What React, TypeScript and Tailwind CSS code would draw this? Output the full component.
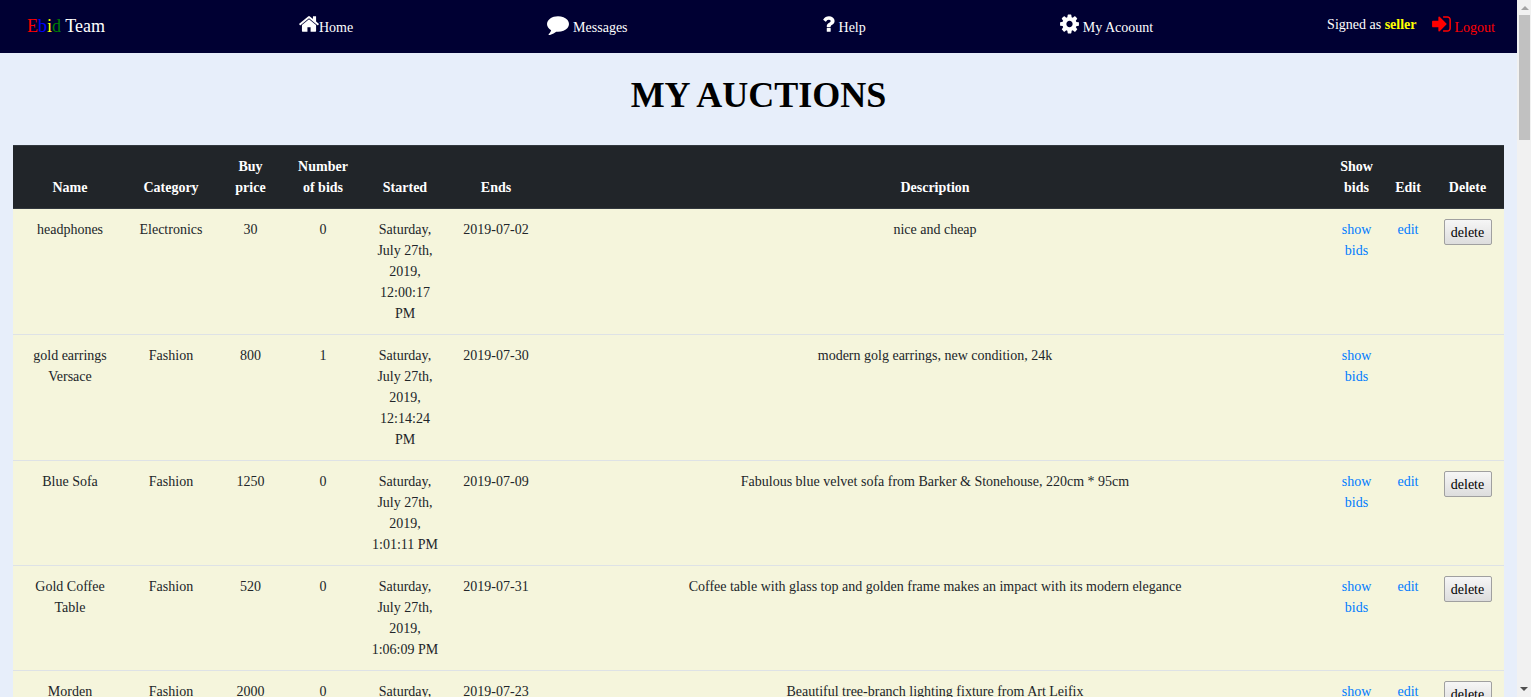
import React from "react";

type IconProps = { d: string; viewBox: string; className: string };

function Icon({ d, viewBox, className }: IconProps) {
  return (
    <svg viewBox={viewBox} className={`shrink-0 fill-current ${className}`} aria-hidden="true">
      <path d={d} />
    </svg>
  );
}

const HOME =
  "M1472 992v480q0 26-19 45t-45 19h-384v-384h-256v384h-384q-26 0-45-19t-19-45v-480q0-1 .5-3t.5-3l575-474 575 474q1 2 1 6zm223-69l-62 74q-8 9-21 11h-3q-13 0-21-7l-692-577-692 577q-12 8-24 7-13-2-21-11l-62-74q-8-10-7-23.5t11-21.5l719-599q32-26 76-26t76 26l244 204v-195q0-14 9-23t23-9h192q14 0 23 9t9 23v408l219 182q10 8 11 21.5t-7 23.5z";
const COMMENT =
  "M1792 896q0 174-120 321.5t-326 233-450 85.5q-70 0-145-8-198 175-460 242-49 14-114 22-17 2-30.5-9t-17.5-29v-1q-3-4-.5-12t2-10 4.5-9.5l6-9 7-8.5 8-9q7-8 31-34.5t34.5-38 31-39.5 32.5-51 27-59 26-76q-157-89-247.5-220t-90.5-281q0-130 71-248.5t191-204.5 286-136.5 348-50.5q244 0 450 85.5t326 233 120 321.5z";
const QUESTION =
  "M1088 1256v240q0 16-12 28t-28 12h-240q-16 0-28-12t-12-28v-240q0-16 12-28t28-12h240q16 0 28 12t12 28zm316-600q0 54-15.5 101t-35 76.5-55 59.5-57.5 43.5-61 35.5q-41 23-68.5 65t-27.5 67q0 17-12 32.5t-28 15.5h-240q-15 0-25.5-18.5t-10.5-37.5v-45q0-83 65-156.5t143-108.5q59-27 84-56t25-76q0-42-46.5-74t-107.5-32q-65 0-108 29-35 25-107 115-13 16-31 16-12 0-25-8l-164-125q-13-10-15.5-25t5.5-28q160-266 464-266 80 0 161 31t146 83 106 127.5 41 158.5z";
const COG =
  "M1152 896q0-106-75-181t-181-75-181 75-75 181 75 181 181 75 181-75 75-181zm512-109v222q0 12-8 23t-20 13l-185 28q-19 54-39 91 35 50 107 138 10 12 10 25t-9 23q-27 37-99 108t-94 71q-12 0-26-9l-138-108q-44 23-91 38-16 136-29 186-7 28-36 28h-222q-14 0-24.5-8.5t-11.5-21.5l-28-184q-49-16-90-37l-141 107q-10 9-25 9-14 0-25-11-126-114-165-168-7-10-7-23 0-12 8-23 15-21 51-66.5t54-70.5q-27-50-41-99l-183-27q-13-2-21-12.5t-8-23.5v-222q0-12 8-23t19-13l186-28q14-46 39-92-40-57-107-138-10-12-10-24 0-10 9-23 26-36 98.5-107.5t94.5-71.5q13 0 26 10l138 107q44-23 91-38 16-136 29-186 7-28 36-28h222q14 0 24.5 8.5t11.5 21.5l28 184q49 16 90 37l142-107q9-9 24-9 13 0 25 10 129 119 165 170 7 8 7 22 0 12-8 23-15 21-51 66.5t-54 70.5q26 50 41 98l183 28q13 2 21 12.5t8 23.5z";
const SIGN_IN =
  "M1312 896q0 26-19 45l-544 544q-19 19-45 19t-45-19-19-45v-288h-448q-26 0-45-19t-19-45v-384q0-26 19-45t45-19h448v-288q0-26 19-45t45-19 45 19l544 544q19 19 19 45zm352-352v704q0 119-84.5 203.5t-203.5 84.5h-320q-13 0-22.5-9.5t-9.5-22.5q0-4-1-20t-.5-26.5 3-23.5 10-19.5 20.5-6.5h320q66 0 113-47t47-113v-704q0-66-47-113t-113-47h-312l-11.5-1-11.5-3-8-5.5-7-9-2-13.5q0-4-1-20t-.5-26.5 3-23.5 10-19.5 20.5-6.5h320q119 0 203.5 84.5t84.5 203.5z";

const columns = [
  { label: "Name", width: "w-[114px]" },
  { label: "Category", width: "w-[88px]" },
  { label: "Buy price", width: "w-[71px]" },
  { label: "Number of bids", width: "w-[74px]" },
  { label: "Started", width: "w-[90px]" },
  { label: "Ends", width: "w-[92px]" },
  { label: "Description", width: "" },
  { label: "Show bids", width: "w-[57px]" },
  { label: "Edit", width: "w-[46px]" },
  { label: "Delete", width: "w-[73px]" },
];

type Auction = {
  name: string;
  category: string;
  price: number;
  bids: number;
  started: string;
  ends: string;
  description: string;
};

const auctions: Auction[] = [
  { name: "headphones", category: "Electronics", price: 30, bids: 0, started: "Saturday, July 27th, 2019, 12:00:17 PM", ends: "2019-07-02", description: "nice and cheap" },
  { name: "gold earrings Versace", category: "Fashion", price: 800, bids: 1, started: "Saturday, July 27th, 2019, 12:14:24 PM", ends: "2019-07-30", description: "modern golg earrings, new condition, 24k" },
  { name: "Blue Sofa", category: "Fashion", price: 1250, bids: 0, started: "Saturday, July 27th, 2019, 1:01:11 PM", ends: "2019-07-09", description: "Fabulous blue velvet sofa from Barker & Stonehouse, 220cm * 95cm" },
  { name: "Gold Coffee Table", category: "Fashion", price: 520, bids: 0, started: "Saturday, July 27th, 2019, 1:06:09 PM", ends: "2019-07-31", description: "Coffee table with glass top and golden frame makes an impact with its modern elegance" },
  { name: "Morden", category: "Fashion", price: 2000, bids: 0, started: "Saturday, July 27th, 2019", ends: "2019-07-23", description: "Beautiful tree-branch lighting fixture from Art Leifix" },
];

function NavBar() {
  return (
    <nav className="flex items-start justify-between bg-[#000033] pt-[13px] pr-[22px] pb-4 pl-[27px] leading-[14px] text-white">
      <a href="#" className="h-6 text-lg leading-[26px]">
        <span className="text-[#ff0000]">E</span>
        <span className="text-[#0000ff]">b</span>
        <span className="text-[#ffff00]">i</span>
        <span className="text-[#008000]">d</span> Team
      </a>
      <a href="#" className="flex items-end">
        <Icon d={HOME} viewBox="80 0 1630 1792" className="h-[22px] w-5" />
        Home
      </a>
      <a href="#" className="flex items-end gap-1">
        <Icon d={COMMENT} viewBox="0 0 1792 1792" className="size-[22px]" />
        Messages
      </a>
      <a href="#" className="flex items-end gap-1">
        <Icon d={QUESTION} viewBox="380 0 1060 1792" className="h-[22px] w-[13px]" />
        Help
      </a>
      <a href="#" className="flex items-end gap-1">
        <Icon d={COG} viewBox="122 0 1548 1792" className="h-[22px] w-[19px]" />
        My Acoount
      </a>
      <div className="-ml-5 flex items-start gap-[15px]">
        <span className="leading-6">
          Signed as <b className="text-[#ffff00]">seller</b>
        </span>
        <a href="#" className="flex items-end gap-1 text-[#ff0000]">
          <Icon d={SIGN_IN} viewBox="122 0 1548 1792" className="h-[22px] w-[19px]" />
          Logout
        </a>
      </div>
    </nav>
  );
}

function AuctionRow({ auction }: { auction: Auction }) {
  const cell = "border-b border-[#dee2e6] px-[11px] py-[10px]";
  const link = "text-[#007bff]";
  const editable = auction.bids === 0;
  return (
    <tr className="bg-[#f5f5dc] align-top">
      <td className={cell}>{auction.name}</td>
      <td className={cell}>{auction.category}</td>
      <td className={cell}>{auction.price}</td>
      <td className={cell}>{auction.bids}</td>
      <td className={cell}>{auction.started}</td>
      <td className={cell}>{auction.ends}</td>
      <td className={cell}>{auction.description}</td>
      <td className={cell}>
        <a href="#" className={link}>show bids</a>
      </td>
      <td className={cell}>
        {editable && <a href="#" className={link}>edit</a>}
      </td>
      <td className={cell}>
        {editable && (
          <button
            type="button"
            className="mx-auto block h-[26px] w-12 rounded-[2px] border border-[#a0a0a0] bg-linear-to-b from-[#f6f6f6] to-[#dddddd] text-black"
          >
            delete
          </button>
        )}
      </td>
    </tr>
  );
}

function ScrollBar() {
  return (
    <div className="flex w-[14px] shrink-0 flex-col items-center justify-between bg-[#f1f1f1]" aria-hidden="true">
      <div className="flex w-full flex-col items-center pl-px">
        <svg viewBox="0 0 14 15" className="h-[15px] w-[14px] fill-[#a3a3a3]">
          <path d="M3 10L7 6l4 4z" />
        </svg>
        <div className="h-[125px] w-[11px] bg-[#c1c1c1]" />
      </div>
      <svg viewBox="0 0 14 15" className="h-[15px] w-[14px] fill-[#505050]">
        <path d="M3 5h8L7 9z" />
      </svg>
    </div>
  );
}

export default function App() {
  return (
    <div className="flex h-screen overflow-hidden bg-[#e7eefa] font-['Liberation_Serif',serif] text-[14px] leading-[21px] text-[#212529]">
      <div className="min-w-0 flex-1 overflow-hidden">
        <NavBar />
        <main className="px-[13px] pt-5">
          <h1 className="mb-7 text-center text-4xl leading-[44px] font-bold text-black">MY AUCTIONS</h1>
          <table className="w-full table-fixed border-separate border-spacing-0 text-center">
            <thead>
              <tr className="bg-[#212529] align-bottom text-white">
                {columns.map((column) => (
                  <th
                    key={column.label}
                    scope="col"
                    className={`border-y border-[#32383e] px-[9px] py-[10px] font-bold ${column.width}`}
                  >
                    {column.label}
                  </th>
                ))}
              </tr>
            </thead>
            <tbody>
              {auctions.map((auction) => (
                <AuctionRow key={auction.name} auction={auction} />
              ))}
            </tbody>
          </table>
        </main>
      </div>
      <ScrollBar />
    </div>
  );
}
